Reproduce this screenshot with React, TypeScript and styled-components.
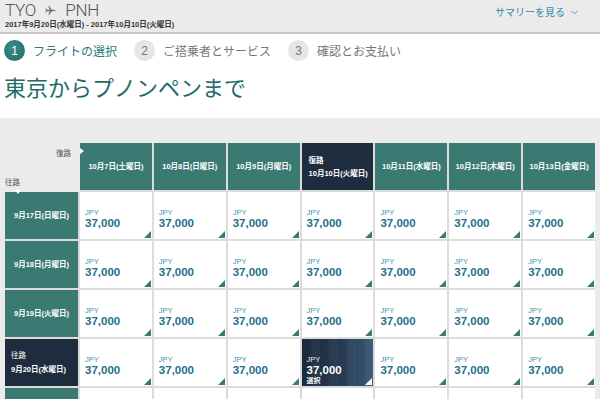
import React from 'react';
import styled, { createGlobalStyle, css } from 'styled-components';
import { ChevronDown } from 'lucide-react';

const Global = createGlobalStyle`
  *, *::before, *::after { box-sizing: border-box; }
  html, body { margin: 0; padding: 0; background: #fff; }
  body { font-family: "Liberation Sans", "Noto Sans CJK JP", sans-serif; overflow: hidden; }
`;

const TEAL = '#3a7a72';
const NAVY = '#1f2c3e';

const Page = styled.div`
  width: 600px;
  height: 399px;
  overflow: hidden;
  background: #fff;
  display: flex;
  flex-direction: column;
`;

const TopBar = styled.header`
  height: 34px;
  flex: none;
  background: #ebebeb;
  border-bottom: 2px solid #c6c6c6;
  display: flex;
  justify-content: space-between;
  align-items: flex-start;
  padding: 0 20px 0 5px;
`;

const RouteBox = styled.div`
  display: flex;
  flex-direction: column;
`;

const Route = styled.div`
  display: flex;
  align-items: center;
  gap: 9px;
  padding-top: 2px;
  height: 19px;
  font-family: Roboto, "Liberation Sans", sans-serif;
  font-weight: 300;
  font-size: 17px;
  line-height: 17px;
  color: #555;
  letter-spacing: -0.2px;
`;

const Dates = styled.div`
  margin-top: 1.5px;
  font-size: 7.5px;
  line-height: 8px;
  font-weight: 700;
  color: #333;
  white-space: nowrap;
`;

const SummaryLink = styled.a`
  margin-top: 6px;
  display: flex;
  align-items: center;
  gap: 4px;
  font-family: "Noto Sans CJK JP", sans-serif;
  font-size: 10px;
  line-height: 12px;
  color: #2d8cab;
  text-decoration: none;
`;

const Steps = styled.nav`
  height: 32px;
  flex: none;
  display: flex;
  align-items: center;
  gap: 17px;
  padding: 1px 0 0 4px;
`;

const Step = styled.div`
  display: flex;
  align-items: center;
  gap: 8px;
`;

const StepNum = styled.span<{ $active?: boolean }>`
  width: 21px;
  height: 21px;
  border-radius: 50%;
  display: flex;
  align-items: center;
  justify-content: center;
  font-family: "Liberation Sans", sans-serif;
  font-size: 12px;
  ${(p) =>
    p.$active
      ? css`
          background: radial-gradient(circle at 40% 35%, #3a8c86, #1f6b66);
          color: #fff;
        `
      : css`
          background: #e6e6e6;
          color: #777;
        `}
`;

const StepLabel = styled.span<{ $active?: boolean }>`
  font-family: "Noto Sans CJK JP", sans-serif;
  font-size: 12px;
  line-height: 14px;
  color: ${(p) => (p.$active ? '#2a7a78' : '#777')};
`;

const Title = styled.h1`
  margin: 5px 0 0;
  padding: 0 0 17px 4px;
  font-family: "Noto Sans CJK JP", sans-serif;
  font-weight: 400;
  font-size: 22px;
  line-height: 30px;
  color: #1f6b69;
  flex: none;
`;

const Section = styled.section`
  flex: 1;
  background: #ebebeb;
  padding: 25px 5px 0;
  overflow: hidden;
`;

const Grid = styled.div`
  width: 590px;
  display: grid;
  grid-template-columns: 73px repeat(7, 1fr);
  grid-template-rows: 47px;
  grid-auto-rows: 47px;
  gap: 2px;
  background: #dcdcdc;
`;

const Corner = styled.div`
  background: #ebebeb;
  position: relative;
  font-family: "Noto Sans CJK JP", sans-serif;
  font-size: 7.5px;
  color: #555;
  display: flex;
  flex-direction: column;
  justify-content: space-between;
  padding: 4px 0 5px;
  margin: 0 -2px -2px 0;
`;

const CornerReturn = styled.span`
  align-self: flex-end;
  padding-right: 9px;
`;

const CornerOut = styled.span`
  align-self: flex-start;
`;

const ColHead = styled.div<{ $selected?: boolean; $first?: boolean }>`
  position: relative;
  background: ${(p) => (p.$selected ? NAVY : TEAL)};
  color: #fff;
  font-family: "Liberation Sans", "Noto Sans CJK JP", sans-serif;
  font-weight: 700;
  font-size: 7.5px;
  line-height: 13px;
  display: flex;
  flex-direction: column;
  justify-content: center;
  align-items: ${(p) => (p.$selected ? 'flex-start' : 'center')};
  padding: ${(p) => (p.$selected ? '0 0 0 7px' : '0')};
  white-space: nowrap;
  ${(p) =>
    p.$first &&
    css`
      &::before {
        content: '';
        position: absolute;
        left: 0;
        top: 5px;
        border-left: 4px solid #fff;
        border-top: 3.5px solid transparent;
        border-bottom: 3.5px solid transparent;
      }
    `}
`;

const RowHead = styled.div<{ $selected?: boolean; $first?: boolean }>`
  position: relative;
  background: ${(p) => (p.$selected ? NAVY : TEAL)};
  color: #fff;
  font-family: "Liberation Sans", "Noto Sans CJK JP", sans-serif;
  font-weight: 700;
  font-size: 7.5px;
  line-height: 14px;
  display: flex;
  flex-direction: column;
  justify-content: center;
  align-items: ${(p) => (p.$selected ? 'flex-start' : 'center')};
  padding: ${(p) => (p.$selected ? '0 0 0 6px' : '0')};
  white-space: nowrap;
  ${(p) =>
    p.$first &&
    css`
      &::before {
        content: '';
        position: absolute;
        top: -2px;
        left: 10px;
        border-top: 4px solid #fff;
        border-left: 3.5px solid transparent;
        border-right: 3.5px solid transparent;
      }
    `}
`;

const SmallLabel = styled.span<{ $bold?: boolean }>`
  font-weight: ${(p) => (p.$bold ? 700 : 400)};
`;

const Cell = styled.div<{ $selected?: boolean }>`
  position: relative;
  padding: 16px 0 0 5px;
  background: ${(p) =>
    p.$selected
      ? `repeating-linear-gradient(90deg, rgba(255,255,255,0) 0 9px, rgba(255,255,255,0.03) 9px 18px), linear-gradient(90deg, #1c2a3a 0%, #263a51 55%, #3b5876 100%)`
      : '#fff'};
  color: ${(p) => (p.$selected ? '#fff' : '#1d6f8a')};
  &::after {
    content: '';
    position: absolute;
    right: 1px;
    bottom: 1px;
    border-bottom: 7px solid ${(p) => (p.$selected ? '#fff' : TEAL)};
    border-left: 7px solid transparent;
  }
`;

const Currency = styled.div<{ $selected?: boolean }>`
  font-size: 7.5px;
  line-height: 9px;
  color: ${(p) => (p.$selected ? '#e8eef4' : '#3d95ad')};
`;

const Amount = styled.div`
  font-size: 11.5px;
  line-height: 12px;
  font-weight: 700;
`;

const Chosen = styled.div`
  font-family: "Noto Sans CJK JP", sans-serif;
  font-size: 7px;
  line-height: 8px;
  font-weight: 700;
`;

const Plane = () => (
  <svg width="11" height="9" viewBox="0 0 22 18" fill="#777">
    <path d="M21 9c0-.9-.8-1.4-1.6-1.4h-5.6L8.6 0H6.6l2.7 7.6H4.2L2.4 5H.8l1.2 4-1.2 4h1.6l1.8-2.6h5.1L6.6 18h2l5.2-7.6h5.6C20.2 10.4 21 9.9 21 9z" />
  </svg>
);

const cols = [
  '10月7日(土曜日)',
  '10月8日(日曜日)',
  '10月9日(月曜日)',
  '10月10日(火曜日)',
  '10月11日(水曜日)',
  '10月12日(木曜日)',
  '10月13日(金曜日)',
];
const rows = ['9月17日(日曜日)', '9月18日(月曜日)', '9月19日(火曜日)', '9月20日(水曜日)', '9月21日(木曜日)'];
const SEL_COL = 3;
const SEL_ROW = 3;

export default function App() {
  return (
    <Page>
      <Global />
      <TopBar>
        <RouteBox>
          <Route>
            <span>TYO</span>
            <Plane />
            <span>PNH</span>
          </Route>
          <Dates>2017年9月20日(水曜日) - 2017年10月10日(火曜日)</Dates>
        </RouteBox>
        <SummaryLink href="#">
          サマリーを見る
          <ChevronDown size={11} strokeWidth={1.8} />
        </SummaryLink>
      </TopBar>
      <Steps>
        <Step>
          <StepNum $active>1</StepNum>
          <StepLabel $active>フライトの選択</StepLabel>
        </Step>
        <Step>
          <StepNum>2</StepNum>
          <StepLabel>ご搭乗者とサービス</StepLabel>
        </Step>
        <Step>
          <StepNum>3</StepNum>
          <StepLabel>確認とお支払い</StepLabel>
        </Step>
      </Steps>
      <Title>東京からプノンペンまで</Title>
      <Section>
        <Grid>
          <Corner>
            <CornerReturn>復路</CornerReturn>
            <CornerOut>往路</CornerOut>
          </Corner>
          {cols.map((c, i) => (
            <ColHead key={c} $selected={i === SEL_COL} $first={i === 0}>
              {i === SEL_COL && <SmallLabel $bold>復路</SmallLabel>}
              <span>{c}</span>
            </ColHead>
          ))}
          {rows.map((r, ri) => (
            <React.Fragment key={r}>
              <RowHead $selected={ri === SEL_ROW} $first={ri === 0}>
                {ri === SEL_ROW && <SmallLabel>往路</SmallLabel>}
                <span>{r}</span>
              </RowHead>
              {cols.map((c, ci) => {
                const sel = ri === SEL_ROW && ci === SEL_COL;
                return (
                  <Cell key={c} $selected={sel}>
                    <Currency $selected={sel}>JPY</Currency>
                    <Amount>37,000</Amount>
                    {sel && <Chosen>選択</Chosen>}
                  </Cell>
                );
              })}
            </React.Fragment>
          ))}
        </Grid>
      </Section>
    </Page>
  );
}
